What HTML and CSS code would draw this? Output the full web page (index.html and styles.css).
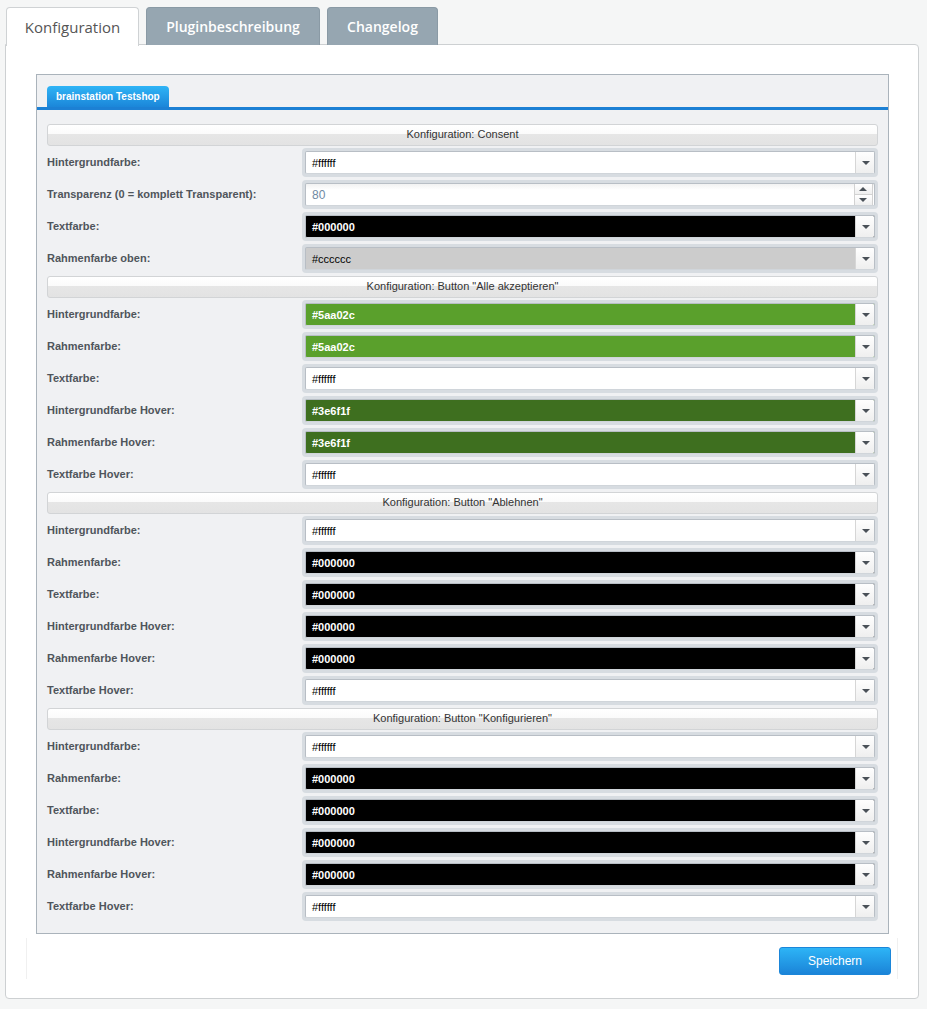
FILE: index.html
```html
<!DOCTYPE html>
<html lang="de">
<head>
<meta charset="utf-8">
<title>Konfiguration</title>
<link rel="stylesheet" href="styles.css">
</head>
<body>
<div class="tabs">
  <div class="tab active">Konfiguration</div>
  <div class="tab">Pluginbeschreibung</div>
  <div class="tab">Changelog</div>
</div>
<div class="panel">
  <div class="box">
    <div class="subtabs"><div class="subtab">brainstation Testshop</div></div>
    <div class="content">
      <div class="head">Konfiguration: Consent</div>
      <div class="row"><label>Hintergrundfarbe:</label><div class="field"><div class="inp c-white"><span>#ffffff</span><i class="dd"></i></div></div></div>
      <div class="row"><label>Transparenz (0 = komplett Transparent):</label><div class="field"><div class="inp num"><span>80</span><i class="spin"><b class="up"></b><b class="down"></b></i></div></div></div>
      <div class="row"><label>Textfarbe:</label><div class="field"><div class="inp c-black"><span>#000000</span><i class="dd"></i></div></div></div>
      <div class="row"><label>Rahmenfarbe oben:</label><div class="field"><div class="inp c-grey"><span>#cccccc</span><i class="dd"></i></div></div></div>

      <div class="head">Konfiguration: Button "Alle akzeptieren"</div>
      <div class="row"><label>Hintergrundfarbe:</label><div class="field"><div class="inp c-green"><span>#5aa02c</span><i class="dd"></i></div></div></div>
      <div class="row"><label>Rahmenfarbe:</label><div class="field"><div class="inp c-green"><span>#5aa02c</span><i class="dd"></i></div></div></div>
      <div class="row"><label>Textfarbe:</label><div class="field"><div class="inp c-white"><span>#ffffff</span><i class="dd"></i></div></div></div>
      <div class="row"><label>Hintergrundfarbe Hover:</label><div class="field"><div class="inp c-dgreen"><span>#3e6f1f</span><i class="dd"></i></div></div></div>
      <div class="row"><label>Rahmenfarbe Hover:</label><div class="field"><div class="inp c-dgreen"><span>#3e6f1f</span><i class="dd"></i></div></div></div>
      <div class="row"><label>Textfarbe Hover:</label><div class="field"><div class="inp c-white"><span>#ffffff</span><i class="dd"></i></div></div></div>

      <div class="head">Konfiguration: Button "Ablehnen"</div>
      <div class="row"><label>Hintergrundfarbe:</label><div class="field"><div class="inp c-white"><span>#ffffff</span><i class="dd"></i></div></div></div>
      <div class="row"><label>Rahmenfarbe:</label><div class="field"><div class="inp c-black"><span>#000000</span><i class="dd"></i></div></div></div>
      <div class="row"><label>Textfarbe:</label><div class="field"><div class="inp c-black"><span>#000000</span><i class="dd"></i></div></div></div>
      <div class="row"><label>Hintergrundfarbe Hover:</label><div class="field"><div class="inp c-black"><span>#000000</span><i class="dd"></i></div></div></div>
      <div class="row"><label>Rahmenfarbe Hover:</label><div class="field"><div class="inp c-black"><span>#000000</span><i class="dd"></i></div></div></div>
      <div class="row"><label>Textfarbe Hover:</label><div class="field"><div class="inp c-white"><span>#ffffff</span><i class="dd"></i></div></div></div>

      <div class="head">Konfiguration: Button "Konfigurieren"</div>
      <div class="row"><label>Hintergrundfarbe:</label><div class="field"><div class="inp c-white"><span>#ffffff</span><i class="dd"></i></div></div></div>
      <div class="row"><label>Rahmenfarbe:</label><div class="field"><div class="inp c-black"><span>#000000</span><i class="dd"></i></div></div></div>
      <div class="row"><label>Textfarbe:</label><div class="field"><div class="inp c-black"><span>#000000</span><i class="dd"></i></div></div></div>
      <div class="row"><label>Hintergrundfarbe Hover:</label><div class="field"><div class="inp c-black"><span>#000000</span><i class="dd"></i></div></div></div>
      <div class="row"><label>Rahmenfarbe Hover:</label><div class="field"><div class="inp c-black"><span>#000000</span><i class="dd"></i></div></div></div>
      <div class="row"><label>Textfarbe Hover:</label><div class="field"><div class="inp c-white"><span>#ffffff</span><i class="dd"></i></div></div></div>
    </div>
  </div>
  <div class="footer"><button class="save">Speichern</button></div>
</div>
</body>
</html>
```
FILE: styles.css
```css
* { box-sizing: border-box; }
html, body { margin: 0; padding: 0; }
body {
  background: #f5f6f6;
  font-family: "Liberation Sans", Arial, sans-serif;
  font-size: 11px;
  color: #333;
  width: 927px;
  height: 1009px;
  overflow: hidden;
}
.tabs {
  display: flex;
  gap: 7px;
  padding: 7px 0 0 6px;
  height: 45px;
  position: relative;
  z-index: 1;
}
.tab {
  height: 38px;
  background: #96a6b1;
  color: #fff;
  font-family: "Open Sans", sans-serif;
  font-weight: 600;
  font-size: 14px;
  line-height: 38px;
  text-align: center;
  border: 1px solid #8a9aa5;
  border-bottom: none;
  border-radius: 4px 4px 0 0;
}
.tab:nth-child(2) { width: 174px; }
.tab:nth-child(3) { width: 111px; }
.tab.active {
  width: 133px;
  background: #fff;
  color: #555;
  font-weight: 500;
  font-size: 15px;
  border-color: #cfd2d4;
  height: 39px;
}
.panel {
  margin: -1px 0 0 5px;
  width: 914px;
  height: 955px;
  background: #fff;
  border: 1px solid #cdd0d2;
  border-radius: 0 4px 4px 4px;
  padding: 29px 29px 0 30px;
}
.box {
  background: #f0f1f3;
  border: 1px solid #aab3bb;
  height: 860px;
}
.subtabs {
  padding: 11px 0 0 10px;
  border-bottom: 3px solid #1c80d4;
  height: 35px;
  display: flex;
}
.subtab {
  height: 21px;
  padding: 0 9px;
  background: linear-gradient(#2fb4f6, #1b86d9);
  color: #fff;
  font-weight: bold;
  font-size: 10px;
  line-height: 22px;
  border-radius: 4px 4px 0 0;
}
.content { padding: 14px 10px 0 10px; }
.head {
  height: 22px;
  margin-top: 2px;
  border: 1px solid #d2d4d6;
  border-radius: 3px;
  background: linear-gradient(#ffffff 0%, #fbfbfb 45%, #e6e6e6 46%, #e3e3e3 100%);
  text-align: center;
  line-height: 19px;
  font-size: 11px;
  color: #333;
}
.content > .head:first-child { margin-top: 0; }
.row {
  display: flex;
  align-items: center;
  height: 32px;
}
.row label {
  width: 255px;
  font-weight: bold;
  color: #4f555b;
  font-size: 11px;
}
.field {
  flex: 1;
  height: 29px;
  padding: 3px;
  background: #d7dce1;
  border-radius: 4px;
  margin-top: 1px;
}
.inp {
  height: 23px;
  display: flex;
  align-items: center;
  border: 1px solid #b8bec5;
  border-bottom-color: #d0d5da;
  border-radius: 2px;
  background: #fff;
  color: #000;
  padding-left: 6px;
  font-size: 11px;
  overflow: hidden;
}
.inp span { flex: 1; }
.c-white { background: #fff; color: #000; }
.c-black { background: #000; color: #fff; font-weight: bold; }
.c-green { background: #5aa02c; color: #fff; font-weight: bold; }
.c-dgreen { background: #3e6f1f; color: #fff; font-weight: bold; }
.c-grey { background: #cccccc; color: #000; }
.num { background: linear-gradient(#f2f2f2, #fff 6px); color: #6f8aa4; font-size: 12px; }
.dd {
  width: 20px;
  height: 23px;
  margin-right: -1px;
  background: linear-gradient(#ffffff, #eeeeee);
  border-left: 1px solid #d6d6d6;
  position: relative;
  flex: none;
}
.dd::after {
  content: "";
  position: absolute;
  left: 6px;
  top: 10px;
  border-left: 4px solid transparent;
  border-right: 4px solid transparent;
  border-top: 4px solid #4a5158;
}
.spin {
  width: 19px;
  height: 23px;
  margin-right: 1px;
  display: flex;
  flex-direction: column;
  flex: none;
}
.spin b {
  flex: 1;
  position: relative;
  background: linear-gradient(#ffffff, #efefef);
  border: 1px solid #d2d2d2;
}
.spin b.down { border-top: none; }
.spin b::after {
  content: "";
  position: absolute;
  left: 4px;
  top: 3px;
  border-left: 4px solid transparent;
  border-right: 4px solid transparent;
}
.spin b.up::after { border-bottom: 4px solid #4a5158; }
.spin b.down::after { border-top: 4px solid #4a5158; }
.footer {
  margin: 4px -9px 0 -10px;
  height: 41px;
  border-left: 1px solid #f0f0f0;
  border-right: 1px solid #f0f0f0;
  display: flex;
  justify-content: flex-end;
  align-items: flex-start;
  padding: 9px 6px 0 0;
}
.save {
  width: 112px;
  height: 28px;
  border: 1px solid #1b86d9;
  border-radius: 3px;
  background: linear-gradient(#2db4f6, #1b84d8);
  color: #fff;
  font-family: "Liberation Sans", Arial, sans-serif;
  font-size: 12px;
  padding: 0;
}
```
